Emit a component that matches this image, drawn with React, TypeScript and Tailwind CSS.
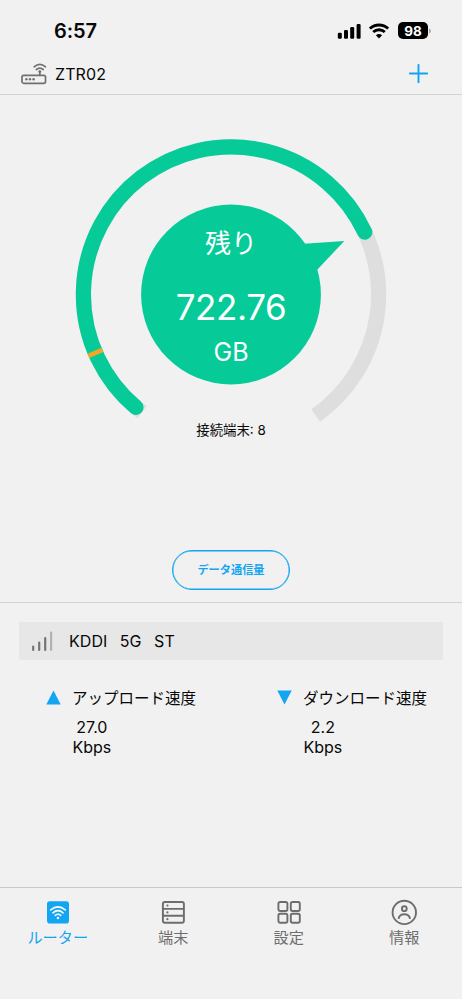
import React from "react";

const CX = 231;
const CY = 199.5;
const R = 147.6;

function point(deg: number, r: number = R) {
  const a = (deg * Math.PI) / 180;
  return `${(CX + r * Math.cos(a)).toFixed(2)} ${(CY + r * Math.sin(a)).toFixed(2)}`;
}

function arc(from: number, to: number) {
  const large = to - from > 180 ? 1 : 0;
  return `M${point(from)}A${R} ${R} 0 ${large} 1 ${point(to)}`;
}

function StatusBar() {
  return (
    <div className="flex h-[54px] items-start justify-between pr-[31px] pl-[54px]">
      <span className="mt-[18px] text-[20px] leading-[26px] font-semibold tracking-[-0.1px]">6:57</span>
      <div className="mt-[20px] flex h-[21px] items-center">
        <svg width="24" height="20" viewBox="0 0 24 20" className="mr-[8px]">
          <rect x="0.8" y="11.8" width="4" height="6" rx="1.2" />
          <rect x="7" y="9" width="4" height="8.8" rx="1.2" />
          <rect x="13.2" y="6" width="4" height="11.8" rx="1.2" />
          <rect x="19.6" y="3" width="4" height="14.8" rx="1.2" />
        </svg>
        <svg width="20" height="20" viewBox="0 0 20 20" fill="none" stroke="#000" strokeWidth="2.8" className="mr-[9px]">
          <path d="M0.9 7.6C6 2.8 14 2.8 19.1 7.6" />
          <path d="M4.2 11C7.5 8 12.5 8 15.8 11" />
          <path d="M6.9 14.3Q10 11.5 13.1 14.3L10 17.6Z" fill="#000" stroke="none" />
        </svg>
        <span className="flex h-[17px] w-[30px] items-center justify-center rounded-[5px] bg-black pt-[2px] text-[13.5px] leading-none font-bold text-white">98</span>
        <svg width="2" height="6" viewBox="0 0 2 6" className="ml-px">
          <path d="M0 0.5Q2 1.2 2 3T0 5.5Z" fill="#aaa" />
        </svg>
      </div>
    </div>
  );
}

function Header() {
  return (
    <header className="flex h-[41px] items-center border-b border-[#d3d3d3] pr-[33px] pb-[1px] pl-[21px]">
      <svg width="26" height="22" viewBox="0 0 26 22" fill="none" stroke="#707070" strokeWidth="1.7" strokeLinecap="round">
        <rect x="1" y="12.3" width="23.5" height="8" rx="1.8" />
        <path d="M18.8 12V8.5M13.1 3.8Q18.8 -1 24.5 3.8M15.4 6.5Q18.8 3.6 22.2 6.5" />
        <g fill="#707070" stroke="none">
          <circle cx="18.8" cy="8.6" r="1.4" />
          <circle cx="5.4" cy="16.3" r="1.2" />
          <circle cx="9" cy="16.3" r="1.2" />
          <circle cx="12.6" cy="16.3" r="1.2" />
        </g>
      </svg>
      <span className="ml-[8px] text-[16px] leading-5 tracking-[0.1px]">ZTR02</span>
      <svg width="20" height="20" viewBox="0 0 20 20" className="ml-auto" stroke="#13a5f2" strokeWidth="1.9" strokeLinecap="round">
        <path d="M9.5 0.9V18.3M0.8 9.5H18.2" />
      </svg>
    </header>
  );
}

function Dial() {
  return (
    <div className="relative h-[325px]">
      <svg width="462" height="345" viewBox="0 0 462 345" className="absolute inset-0" fill="none">
        <path d={arc(127.1, 415)} stroke="#dedede" strokeWidth="15.2" />
        <path d={arc(130.1, 335)} stroke="#06cb99" strokeWidth="15.2" strokeLinecap="round" />
        <path d={`M${point(156.7, 140)}L${point(156.7, 155.2)}`} stroke="#f5a623" strokeWidth="4.4" />
        <circle cx={CX} cy={CY} r="89.9" fill="#06cb99" />
        <path d="M304 148.8L344.3 146L316.5 175.5Z" fill="#06cb99" />
      </svg>
      <div className="relative flex flex-col items-center pt-[130px] text-white">
        <span className="text-[26px] leading-[38px]">残り</span>
        <span className="mt-[23px] text-[35px] leading-[42px] tracking-[-0.4px]">722.76</span>
        <span className="mt-[8px] text-[25px] leading-[32px]">GB</span>
      </div>
    </div>
  );
}

function Speed({ label, value, down }: { label: string; value: string; down?: boolean }) {
  return (
    <div className="flex w-[151px] gap-[11px]">
      <svg width="15" height="15" viewBox="0 0 15 15" className="mt-[6px] shrink-0" fill="#13a5f2">
        <path d={down ? "M0.3 0.5H14.7L7.5 14.5Z" : "M0.3 14.5H14.7L7.5 0.5Z"} />
      </svg>
      <div className="flex flex-col items-start whitespace-nowrap">
        <span className="pt-px text-[15.5px] leading-[28px]">{label}</span>
        <div className="mt-[4px] ml-[0.5px] flex flex-col items-center text-[16px] leading-5">
          <span>{value}</span>
          <span>Kbps</span>
        </div>
      </div>
    </div>
  );
}

function Tab({ label, active, children }: { label: string; active?: boolean; children: React.ReactNode }) {
  return (
    <div className={`flex flex-1 flex-col items-center ${active ? "text-[#13a5f2]" : "text-[#6d6d6d]"}`}>
      <svg width="28" height="28" viewBox="0 0 28 28" fill="none" stroke="currentColor" strokeWidth="1.9">
        {children}
      </svg>
      <span className="mt-px text-[15.2px] leading-[22px]">{label}</span>
    </div>
  );
}

export default function App() {
  return (
    <div className="flex h-[999px] w-[462px] flex-col overflow-hidden bg-[#f1f1f1] font-['Inter','Noto_Sans_CJK_JP',sans-serif] text-[#080808]">
      <StatusBar />
      <Header />
      <section className="flex h-[508px] flex-col border-b border-[#d3d3d3]">
        <Dial />
        <p className="text-center text-[13.4px] leading-5">接続端末: 8</p>
        <button className="mx-auto mt-[110px] h-[40px] w-[118px] rounded-full border border-[#13a5f2] pt-px text-[11.2px] font-bold text-[#13a5f2] shadow-[inset_0_0_0_0.4px_#13a5f2]">データ通信量</button>
      </section>
      <section className="h-[284px] px-[19px] pt-[19px]">
        <div className="flex h-[38px] items-center bg-[#e7e7e7] pl-[12px] text-[16px]">
          <svg width="24" height="22" viewBox="0 0 24 22" strokeWidth="2.2" strokeLinecap="round" stroke="#757575">
            <path d="M2.2 16.5V20M8.2 12.5V20M14.2 8V20" />
            <path d="M20.1 2.5V20" stroke="#b2b2b2" />
          </svg>
          <div className="ml-[14px] flex gap-[12.5px] tracking-[0.05px]">
            <span>KDDI</span>
            <span>5G</span>
            <span>ST</span>
          </div>
        </div>
        <div className="mt-[24px] flex justify-between pr-[15px] pl-[27px]">
          <Speed label="アップロード速度" value="27.0" />
          <Speed label="ダウンロード速度" value="2.2" down />
        </div>
      </section>
      <nav className="flex flex-1 border-t border-[#c9c9c9] pt-[10px]">
        <Tab label="ルーター" active>
          <rect x="3" y="3.2" width="22" height="22.4" rx="2.8" fill="currentColor" stroke="none" />
          <g stroke="#fff" strokeWidth="1.6" strokeLinecap="round">
            <path d="M6.6 12Q14 5.8 21.4 12M8.9 14.8Q14 10.6 19.1 14.8M11.2 17.3Q14 15.2 16.8 17.3" />
            <circle cx="14" cy="20" r="0.5" />
          </g>
        </Tab>
        <Tab label="端末">
          <rect x="3.9" y="4" width="21" height="20.8" rx="2" />
          <path d="M3.9 10.9H24.9M3.9 17.8H24.9" />
          <g fill="currentColor" stroke="none">
            <circle cx="8.4" cy="7.5" r="1.1" />
            <circle cx="8.4" cy="14.4" r="1.1" />
            <circle cx="8.4" cy="21.2" r="1.1" />
          </g>
        </Tab>
        <Tab label="設定">
          <rect x="3.4" y="4" width="9" height="9" rx="1.7" />
          <rect x="15.8" y="4" width="9" height="9" rx="1.7" />
          <rect x="3.4" y="15.8" width="9" height="9" rx="1.7" />
          <rect x="15.8" y="15.8" width="9" height="9" rx="1.7" />
        </Tab>
        <Tab label="情報">
          <circle cx="14.3" cy="14.4" r="11.7" />
          <circle cx="14.3" cy="10.7" r="2.4" />
          <path d="M8.6 20.9C9.1 14.6 19.5 14.6 20 20.9" />
        </Tab>
      </nav>
    </div>
  );
}
